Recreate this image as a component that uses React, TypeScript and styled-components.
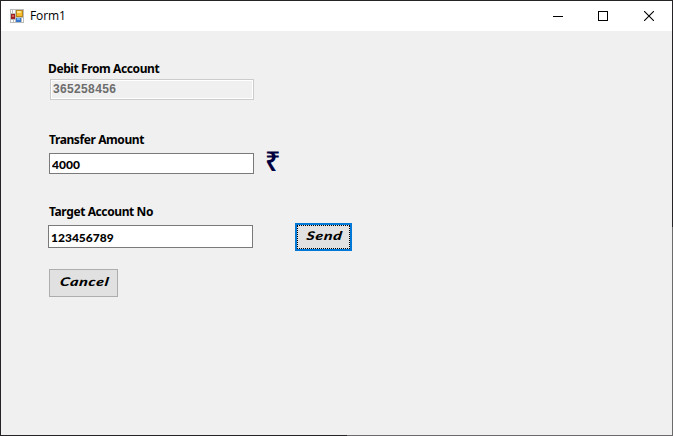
import React from 'react';
import styled, { createGlobalStyle } from 'styled-components';

const GlobalStyle = createGlobalStyle`
  * { box-sizing: border-box; }
  body { margin: 0; overflow: hidden; }
`;

const Window = styled.main`
  width: 673px;
  height: 436px;
  padding: 1px;
  display: flex;
  flex-direction: column;
  background:
    linear-gradient(#6b696b, #6b696b) right bottom / 326px 1px no-repeat,
    linear-gradient(#6b6b6b, #6b6b6b) right bottom / 1px 209px no-repeat,
    #252326;
  font-family: 'Noto Sans', 'Open Sans', sans-serif;
  color: #000;
`;

const TitleBar = styled.header`
  height: 30px;
  flex: none;
  display: flex;
  align-items: center;
  background: #fff;
  padding-left: 9px;
`;

const Title = styled.h1`
  flex: 1;
  margin: 0 0 0 6px;
  font: 400 12px/16px 'Open Sans', sans-serif;
  letter-spacing: -0.1px;
`;

const WindowButton = styled.button<{ $width: number }>`
  width: ${p => p.$width}px;
  height: 30px;
  padding: 0;
  border: 0;
  background: none;
  display: grid;
  place-items: center;
`;

const Form = styled.form`
  flex: 1;
  display: flex;
  flex-direction: column;
  align-items: flex-start;
  padding: 30px 0 0 47px;
  background: #f0f0f0;
`;

const Label = styled.label<{ $gap: number; $indent?: number }>`
  height: 16px;
  margin: 0 0 ${p => p.$gap}px ${p => p.$indent ?? 0}px;
  font: 700 12px/16px 'Noto Sans', sans-serif;
  white-space: nowrap;
  letter-spacing: -0.4px;
`;

const Row = styled.div<{ $height: number; $after: number; $indent?: number }>`
  display: flex;
  align-items: flex-start;
  height: ${p => p.$height}px;
  margin: 0 0 ${p => p.$after}px ${p => p.$indent ?? 0}px;
`;

const Input = styled.input<{ $height: number; $width: number }>`
  width: ${p => p.$width}px;
  height: ${p => p.$height}px;
  padding: 2px 2px 0;
  border: 1px solid #7a7a7a;
  border-radius: 0;
  outline: 0;
  background: #fff;
  color: #000;
  font: 900 12px/16px Lato, sans-serif;
  letter-spacing: 0;

  &:disabled {
    padding: 0 2px 1px;
    border-color: #ccc;
    box-shadow: inset 0 0 0 1px #fff;
    background: #f0f0f0;
    color: #6d6d6d;
    font: 700 12px/16px 'Liberation Sans', sans-serif;
    letter-spacing: 0.35px;
  }
`;

const Currency = styled.span`
  margin: -7px 0 0 11px;
  font: 600 27px/30px 'Noto Sans', sans-serif;
  color: #000040;
`;

const Button = styled.button<{ $width: number; $focused?: boolean }>`
  width: ${p => p.$width}px;
  height: 28px;
  padding: 0 0 3px 2px;
  border: ${p => (p.$focused ? '2px solid #0078d7' : '1px solid #adadad')};
  outline: ${p => (p.$focused ? '1px dotted #000' : 'none')};
  outline-offset: -3px;
  background: #e1e1e1;
  color: #000;
  font: italic 900 12px/16px Lato, cursive;
  letter-spacing: 0.5px;
  white-space: nowrap;
`;

const SendButton = styled(Button)`
  margin: -2px 0 0 42px;
`;

const WideText = styled.span`
  display: inline-block;
  transform: scaleX(1.32) skewX(-6deg);
`;

const FormIcon = () => (
  <svg width="14" height="14" viewBox="0 0 14 14" shapeRendering="crispEdges" aria-hidden="true">
    <path fill="#bcbcbc" d="M0 0h14v14H0z" />
    <path fill="#fff" d="M1 1h1v3H1zM3 1h2v3H3zM1 11h2v2H1zM4 11h1v2H4zM12 9h1v4h-1z" />
    <path fill="#b7891d" d="M6 1h7v7H6z" />
    <path fill="#f7bd2d" d="M7 2h5v5H7z" />
    <path fill="#ffe48a" d="M7 2h4v2H7z" />
    <path fill="#9b2020" d="M1 5h4v5H1z" />
    <path fill="#dc6257" d="M2 6h2v2H2z" />
    <path fill="#3977ca" d="M6 9h5v4H6z" />
    <path fill="#79b4f3" d="M7 9h3v2H7z" />
  </svg>
);

export default function App() {
  return (
    <>
      <GlobalStyle />
      <Window>
        <TitleBar>
          <FormIcon />
          <Title>Form1</Title>
          <WindowButton $width={44} type="button" aria-label="Minimize">
            <svg width="10" height="10" shapeRendering="crispEdges"><path d="M0 5h10v1H0z" /></svg>
          </WindowButton>
          <WindowButton $width={46} type="button" aria-label="Maximize">
            <svg width="10" height="10" shapeRendering="crispEdges"><path d="M.5.5h9v9h-9z" fill="none" stroke="#000" /></svg>
          </WindowButton>
          <WindowButton $width={46} type="button" aria-label="Close">
            <svg width="10" height="10"><path d="M0 0l10 10M10 0L0 10" fill="none" stroke="#000" strokeWidth="1.1" /></svg>
          </WindowButton>
        </TitleBar>
        <Form>
          <Label htmlFor="debit" $gap={2}>Debit From Account</Label>
          <Row $height={21} $after={32} $indent={2}>
            <Input id="debit" $width={204} $height={21} defaultValue="365258456" disabled />
          </Row>
          <Label htmlFor="amount" $gap={5} $indent={1}>Transfer Amount</Label>
          <Row $height={21} $after={30} $indent={1}>
            <Input id="amount" $width={205} $height={21} defaultValue="4000" />
            <Currency>₹</Currency>
          </Row>
          <Label htmlFor="target" $gap={5} $indent={1}>Target Account No</Label>
          <Row $height={23} $after={21}>
            <Input id="target" $width={205} $height={23} defaultValue="123456789" />
            <SendButton type="button" $width={57} $focused><WideText>Send</WideText></SendButton>
          </Row>
          <Row $height={28} $after={0} $indent={1}>
            <Button type="button" $width={69}><WideText>Cancel</WideText></Button>
          </Row>
        </Form>
      </Window>
    </>
  );
}
